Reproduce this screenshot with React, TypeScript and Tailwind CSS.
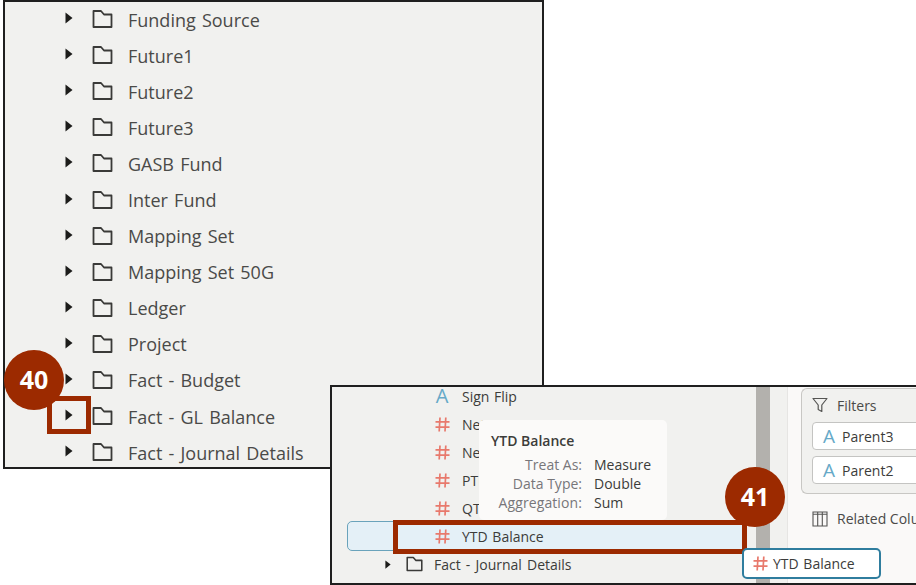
const folderPath = "M1.5 17.5V1.5H9L12 5H19.5V17.5Z";

function Folder({ small }: { small?: boolean }) {
  return (
    <svg width={small ? 17 : 21} height={small ? 16 : 20} viewBox="0 0 21 19" fill="none" className="shrink-0">
      <path d={folderPath} stroke="#3a3a38" strokeWidth={small ? 1.9 : 1.8} strokeLinejoin="round" />
    </svg>
  );
}

function Caret({ small }: { small?: boolean }) {
  return (
    <svg width={small ? 6 : 8} height={small ? 9 : 12} viewBox="0 0 8 12" className="shrink-0">
      <path d="M0.5 0.5L7.5 6L0.5 11.5Z" fill="#1c1c1a" />
    </svg>
  );
}

function Hash() {
  return (
    <svg width="15" height="15" viewBox="0 0 15 15" fill="none" stroke="#e8796c" strokeWidth="1.7" className="shrink-0">
      <path d="M5 0.5L4.2 14.5M10.8 0.5L10 14.5M0.5 4.8H14.5M0.5 10.2H14.5" />
    </svg>
  );
}

function LetterA({ size = "text-[20px]" }: { size?: string }) {
  return <span className={`${size} leading-none text-[#66a9c8]`}>A</span>;
}

const rows = [
  "Funding Source",
  "Future1",
  "Future2",
  "Future3",
  "GASB Fund",
  "Inter Fund",
  "Mapping Set",
  "Mapping Set 50G",
  "Ledger",
  "Project",
  "Fact - Budget",
  "Fact - GL Balance",
  "Fact - Journal Details",
];

function FieldRow({ label, icon }: { label: string; icon: "a" | "h" }) {
  return (
    <div className="flex h-7 items-center pl-[102px]">
      <div className="flex w-4 justify-center">{icon === "a" ? <LetterA /> : <Hash />}</div>
      <span className="ml-[12px] text-[14px] [word-spacing:1px] text-[#3c3c3a]">{label}</span>
    </div>
  );
}

function Chip({ label }: { label: string }) {
  return (
    <div className="flex h-[28px] w-[110px] items-center gap-[7px] rounded-[4px] border border-[#c4c4c2] bg-white pl-[10px]">
      <LetterA size="text-[19px]" />
      <span className="text-[14px] text-[#3c3c3a]">{label}</span>
    </div>
  );
}

export default function App() {
  return (
    <div className="relative h-[585px] w-[916px] overflow-hidden bg-white font-['Open_Sans',sans-serif]">
      <div className="ml-[3px] flex h-[469px] w-[541px] flex-col border-2 border-[#1f1f1f] bg-[#f1f1ef]">
        {rows.map((r) => (
          <div key={r} className="flex h-[36.1px] shrink-0 items-center pl-[60px]">
            <div className="-mt-[4px]"><Caret /></div>
            <div className="-mt-[2px] ml-[19px]"><Folder /></div>
            <span className="ml-[15px] text-[18px] [word-spacing:1.5px] text-[#4a4a48]">{r}</span>
          </div>
        ))}
      </div>

      {/* overlay screenshot */}
      <div className="absolute left-[330px] top-[385px] flex h-[200px] w-[586px] border-2 border-[#1f1f1f] bg-[#f1f1ef]">
        <div className="relative w-[424px] shrink-0">
          <div className="-mt-[5px]">
            <FieldRow label="Sign Flip" icon="a" />
            <FieldRow label="Net Dr" icon="h" />
            <FieldRow label="Net Cr" icon="h" />
            <FieldRow label="PTD Balance" icon="h" />
            <FieldRow label="QTD Balance" icon="h" />
            <div className="relative">
              <div className="absolute left-[15px] right-[12px] top-[-1px] h-[30px] rounded-[5px] border border-[#6aa3bb] bg-[#e4f0f7]" />
              <div className="relative"><FieldRow label="YTD Balance" icon="h" /></div>
            </div>
            <div className="flex h-7 items-center pl-[53px]">
              <Caret small />
              <div className="ml-[15px]"><Folder small /></div>
              <span className="ml-[11px] text-[14px] [word-spacing:1.5px] text-[#3c3c3a]">Fact - Journal Details</span>
            </div>
          </div>

          <div className="absolute left-[147px] top-[33px] h-[100px] w-[188px] rounded-[5px] bg-[#fbfaf9] pl-[12px] pt-[11px]">
            <div className="text-[14px] font-semibold leading-[20px] text-[#3c3c3a]">YTD Balance</div>
            <div className="mt-[4px] grid grid-cols-[91px_1fr] gap-x-[12px] text-[14px] leading-[19px]">
              <span className="text-right text-[#77767a]">Treat As:</span><span className="text-[#3c3c3a]">Measure</span>
              <span className="text-right text-[#77767a]">Data Type:</span><span className="text-[#3c3c3a]">Double</span>
              <span className="whitespace-nowrap text-right text-[14px] text-[#77767a] [letter-spacing:0.1px]">Aggregation:</span><span className="text-[#3c3c3a]">Sum</span>
            </div>
          </div>
        </div>

        <div className="w-[14px] shrink-0 bg-[#b3b1ad]" />
        <div className="w-[17px] shrink-0 bg-[#f1f1ef]" />
        <div className="flex-1 border-l border-[#e6e5e3] bg-[#faf9f8] pl-[13px]">
          <div className="mt-[1px] h-[106px] rounded-l-[6px] border border-r-0 border-[#c8c7c4] bg-[#f1f1ef] pl-[10px] pt-[6px]">
            <div className="flex h-[20px] items-center gap-[9px]">
              <svg width="16" height="16" viewBox="0 0 16 16" fill="none">
                <path d="M1 1.5H15L9.8 8V14.5L6.2 12.5V8Z" stroke="#555553" strokeWidth="1.2" strokeLinejoin="round" />
              </svg>
              <span className="text-[14px] text-[#4a4a48]">Filters</span>
            </div>
            <div className="mt-[7px] flex flex-col gap-[6px]"><Chip label="Parent3" /><Chip label="Parent2" /></div>
          </div>
          <div className="ml-[11px] mt-[14px] flex items-center gap-[9px]">
            <svg width="16" height="16" viewBox="0 0 16 16" fill="none" stroke="#555553" strokeWidth="1.1">
              <path d="M1 1H15V15H1ZM5.7 1V15M10.3 1V15M1 3.2H15" />
            </svg>
            <span className="whitespace-nowrap text-[14px] text-[#4a4a48]">Related Columns</span>
          </div>
        </div>
      </div>

      {/* annotations */}
      <div className="absolute left-[47px] top-[396px] h-[38px] w-[44px] border-[5px] border-[#9c2a00]" />
      <div className="absolute left-[4px] top-[350px] flex h-[60px] w-[60px] items-center justify-center rounded-full bg-[#9c2a00] text-[25px] font-bold text-white">40</div>

      <div className="absolute left-[393px] top-[520px] h-[34px] w-[354px] border-[5px] border-[#9c2a00]" />
      <div className="absolute left-[725px] top-[467px] flex h-[60px] w-[60px] items-center justify-center rounded-full bg-[#9c2a00] text-[25px] font-bold text-white">41</div>

      <div className="absolute left-[742px] top-[548px] flex h-[31px] w-[139px] items-center gap-[5px] rounded-[5px] border-2 border-[#2f7d9e] bg-white pl-[9px]">
        <Hash />
        <span className="text-[14px] [word-spacing:1px] text-[#3c3c3a]">YTD Balance</span>
      </div>
    </div>
  );
}
